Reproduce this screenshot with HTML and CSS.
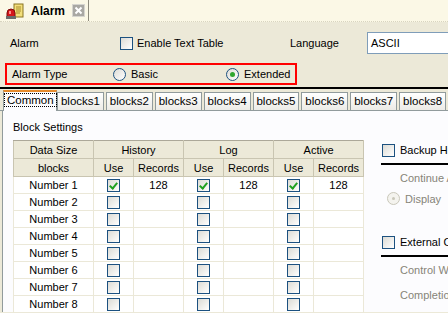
FILE: index.html
```html
<!DOCTYPE html>
<html lang="en">
<head>
    <meta charset="UTF-8">
    <title>Alarm</title>
    <link rel="stylesheet" href="styles.css">
</head>
<body>
    <div class="docTabs">
        <div class="docTab">
            <svg class="docIcon" width="18" height="16" viewBox="0 0 18 16">
                <rect x="8" y="1" width="9" height="13" fill="#f3df7a" stroke="#8a7420"/>
                <path d="M10 4h5M10 6h5M10 8h5M10 10h4" stroke="#a88d2c"/>
                <path d="M1 15 V10 a4 4 0 0 1 8 0 V15 Z" fill="#d4161a" stroke="#7d0d0d"/>
                <rect x="0" y="13" width="10" height="3" fill="#6b6b6b"/>
                <rect x="3" y="8" width="2" height="3" fill="#ff8a8a"/>
            </svg>
            <span class="docTitle">Alarm</span>
            <span class="closeBtn">
                <svg width="9" height="9" viewBox="0 0 9 9"><path d="M1.5 1.5l6 6M7.5 1.5l-6 6" stroke="#fff" stroke-width="2"/></svg>
            </span>
        </div>
    </div>

    <div class="panel">
        <div class="fila fila1">
            <span class="lblAlarm">Alarm</span>
            <span class="check"></span>
            <span class="lblEnable">Enable Text Table</span>
            <span class="lblLang">Language</span>
            <span class="inputBox">ASCII</span>
        </div>

        <div class="alarmType">
            <span class="lblType">Alarm Type</span>
            <span class="radio"></span>
            <span class="lblBasic">Basic</span>
            <span class="radio on"></span>
            <span>Extended</span>
        </div>

        <div class="lineaNegra"></div>

        <div class="tabs">
            <span class="tab activa"><span class="foco">Common</span></span>
            <span class="tab">blocks1</span>
            <span class="tab">blocks2</span>
            <span class="tab">blocks3</span>
            <span class="tab">blocks4</span>
            <span class="tab">blocks5</span>
            <span class="tab">blocks6</span>
            <span class="tab">blocks7</span>
            <span class="tab">blocks8</span>
        </div>

        <div class="contenido">
            <div class="izq">
                <div class="titulo">Block Settings</div>
                <table class="tabla">
                    <colgroup>
                        <col style="width: 80px">
                        <col style="width: 40px"><col style="width: 50px">
                        <col style="width: 40px"><col style="width: 50px">
                        <col style="width: 40px"><col style="width: 50px">
                    </colgroup>
                    <tr class="cab">
                        <th>Data Size</th>
                        <th colspan="2">History</th>
                        <th colspan="2">Log</th>
                        <th colspan="2">Active</th>
                    </tr>
                    <tr class="cab">
                        <th>blocks</th>
                        <th>Use</th><th>Records</th>
                        <th>Use</th><th>Records</th>
                        <th>Use</th><th>Records</th>
                    </tr>
                    <tr>
                        <td>Number 1</td>
                        <td><span class="check on"></span></td><td>128</td>
                        <td><span class="check on"></span></td><td>128</td>
                        <td><span class="check on"></span></td><td>128</td>
                    </tr>
                    <tr><td>Number 2</td><td><span class="check"></span></td><td></td><td><span class="check"></span></td><td></td><td><span class="check"></span></td><td></td></tr>
                    <tr><td>Number 3</td><td><span class="check"></span></td><td></td><td><span class="check"></span></td><td></td><td><span class="check"></span></td><td></td></tr>
                    <tr><td>Number 4</td><td><span class="check"></span></td><td></td><td><span class="check"></span></td><td></td><td><span class="check"></span></td><td></td></tr>
                    <tr><td>Number 5</td><td><span class="check"></span></td><td></td><td><span class="check"></span></td><td></td><td><span class="check"></span></td><td></td></tr>
                    <tr><td>Number 6</td><td><span class="check"></span></td><td></td><td><span class="check"></span></td><td></td><td><span class="check"></span></td><td></td></tr>
                    <tr><td>Number 7</td><td><span class="check"></span></td><td></td><td><span class="check"></span></td><td></td><td><span class="check"></span></td><td></td></tr>
                    <tr><td>Number 8</td><td><span class="check"></span></td><td></td><td><span class="check"></span></td><td></td><td><span class="check"></span></td><td></td></tr>
                </table>
            </div>

            <div class="der">
                <div class="grupo">
                    <span class="check"></span>
                    <span>Backup History</span>
                </div>
                <div class="gris primero">Continue Alarm</div>
                <div class="gris radioFila"><span class="radio off"></span><span>Display</span></div>

                <div class="grupo grupo2">
                    <span class="check"></span>
                    <span>External Output</span>
                </div>
                <div class="gris primero">Control Word</div>
                <div class="gris segundo">Completion</div>
            </div>
        </div>
    </div>
</body>
</html>
```

FILE: styles.css
```css
/* Reset */
body, table, th, td {
    margin: 0;
    padding: 0;
}

body {
    font-family: "Liberation Sans", Arial, sans-serif;
    font-size: 11px;
    color: #000;
    width: 448px;
    height: 313px;
    overflow: hidden;
    background-color: #ece9d8;
}

/* Pestaña del documento */
.docTabs {
    height: 21px;
    background-color: #fbf8e6;
    border-bottom: 1px dotted #d8d4c0;
    display: flex;
}

.docTab {
    width: 82px;
    padding-left: 6px;
    display: flex;
    align-items: center;
    border-right: 1px solid #8e8b7c;
}

.docIcon {
    margin-top: 1px;
}

.docTitle {
    font-weight: bold;
    font-size: 12px;
    margin-left: 7px;
    width: 41px;
}

.closeBtn {
    width: 11px;
    height: 11px;
    background-color: #a9a8a3;
    border: 1px solid #d6d5cf;
    display: flex;
    align-items: center;
    justify-content: center;
}

/* Panel principal */
.panel {
    background-color: #ece9d8;
}

.fila {
    display: flex;
    align-items: center;
    overflow: hidden;
}

.fila > * {
    flex: none;
}

.fila1 {
    height: 22px;
    padding-top: 10px;
}

.lblAlarm {
    width: 110px;
    padding-left: 10px;
}

.lblEnable {
    width: 153px;
    margin-left: 4px;
}

.lblLang {
    width: 77px;
}

.inputBox {
    width: 90px;
    height: 20px;
    line-height: 20px;
    padding-left: 3px;
    background-color: #fff;
    border: 1px solid #7f9db9;
    border-right: none;
}

.alarmType {
    margin: 9px 0 0 5px;
    width: 288px;
    height: 18px;
    border: 2px solid #f00;
    display: flex;
    align-items: center;
}

.lblType {
    width: 101px;
    padding-left: 5px;
}

.lblBasic {
    width: 95px;
}

.lineaNegra {
    margin-top: 2px;
    height: 2px;
    background-color: #000;
}

/* Pestañas */
.tabs {
    height: 21px;
    display: flex;
    align-items: flex-end;
    padding-left: 3px;
    border-bottom: 1px solid #919b9c;
}

.tab {
    width: 46px;
    height: 17px;
    line-height: 17px;
    text-align: center;
    margin-right: 2px;
    background: linear-gradient(#ffffff, #ecebe6);
    border: 1px solid #919b9c;
    border-bottom: none;
    font-size: 11.5px;
}

.tab.activa {
    width: 52px;
    height: 19px;
    line-height: 17px;
    margin-right: 0;
    margin-bottom: -1px;
    background: #fcfcfe;
    border-top: 2px solid #e68b2c;
}

.foco {
    border: 1px dotted #000;
    padding: 0 2px;
}

/* Contenido */
.contenido {
    height: 201px;
    background-color: #fcfcfe;
    border-left: 1px solid #919b9c;
    margin-left: 2px;
    display: flex;
}

.izq {
    padding-left: 10px;
    flex: none;
}

.titulo {
    margin-top: 10px;
    height: 19px;
}

.tabla {
    width: 351px;
    table-layout: fixed;
    border-collapse: collapse;
    border-left: 1px solid #aca899;
    text-align: center;
}

.tabla th {
    background-color: #ece9d8;
    font-weight: normal;
    height: 17px;
    border: 1px solid #c9c5b1;
    border-top: none;
}

.tabla tr:first-child th {
    border-top: 1px solid #aca899;
}

.tabla td {
    height: 16px;
    border: 1px solid #ebe8d8;
    border-top: none;
    background-color: #fff;
    padding: 0;
}

.tabla td .check {
    vertical-align: middle;
}

/* Casillas */
.check {
    display: inline-block;
    width: 11px;
    height: 11px;
    border: 1px solid #1c5180;
    background: linear-gradient(135deg, #dcdbd5, #ffffff);
    position: relative;
    flex: none;
}

.check.on::after {
    content: "";
    position: absolute;
    left: 3px;
    top: 1px;
    width: 3px;
    height: 6px;
    border: solid #21a121;
    border-width: 0 2px 2px 0;
    transform: rotate(40deg);
}

.radio {
    display: inline-block;
    width: 11px;
    height: 11px;
    border: 1px solid #1c5180;
    border-radius: 50%;
    background: linear-gradient(135deg, #dcdbd5, #ffffff);
    margin-right: 5px;
    position: relative;
    flex: none;
}

.radio.on::after {
    content: "";
    position: absolute;
    left: 3px;
    top: 3px;
    width: 5px;
    height: 5px;
    border-radius: 50%;
    background-color: #2fa62f;
}

.radio.off {
    border-color: #c9c7ba;
    background: #f4f3ee;
}

.radio.off::after {
    content: "";
    position: absolute;
    left: 4px;
    top: 4px;
    width: 3px;
    height: 3px;
    border-radius: 50%;
    background-color: #c9c7ba;
}

/* Grupos de la derecha */
.der {
    padding-left: 17px;
    white-space: nowrap;
    flex: none;
}

.grupo {
    margin-top: 31px;
    height: 16px;
    width: 120px;
    display: flex;
    align-items: center;
    gap: 5px;
    padding-bottom: 5px;
    border-bottom: 2px solid #000;
    padding-left: 1px;
}

.grupo2 {
    margin-top: 29px;
}

.gris {
    color: #868478;
    padding-left: 19px;
}

.primero {
    margin-top: 7px;
}

.radioFila {
    display: flex;
    align-items: center;
    padding-left: 6px;
    margin-top: 8px;
}

.segundo {
    margin-top: 13px;
}
```
